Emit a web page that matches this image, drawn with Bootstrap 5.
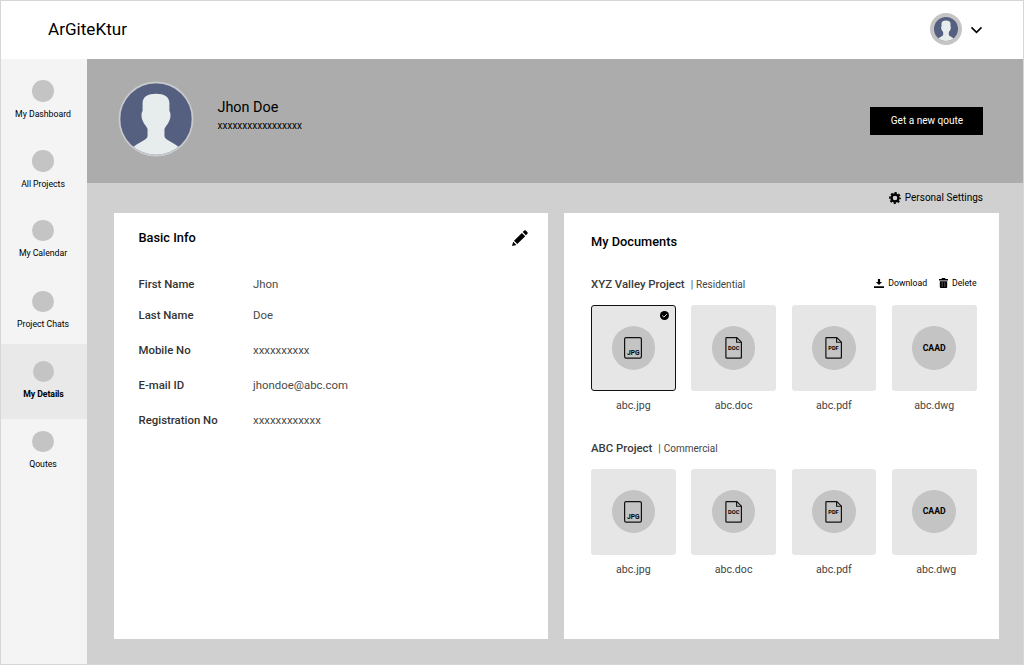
<!DOCTYPE html>
<html lang="en">
<head>
<meta charset="utf-8">
<meta name="viewport" content="width=device-width, initial-scale=1">
<title>ArGiteKtur</title>
<link href="https://cdn.jsdelivr.net/npm/bootstrap@5.3.0/dist/css/bootstrap.min.css" rel="stylesheet">
<style>
  body { font-family: Roboto, "Liberation Sans", sans-serif; color: #000; line-height: 1; }
  .app { height: 665px; border: 1px solid #d6d6d6; overflow: hidden; }
  .topbar { height: 58px; padding: 0 40px 2px 47px; }
  .brand-name { font-size: 17.1px; padding-top: 2px; }
  .side { flex: 0 0 86px; background: #f4f4f4; padding-top: 4px; display: grid; grid-template-rows: 70px 69.5px 71px 70px 75px 70px; align-content: start; }
  .side a { padding: 17px 2px 0 0; font-size: 8.75px; letter-spacing: -.04px; color: #000; text-decoration: none; }
  .side a:last-child { padding-top: 12px; }
  .side a.active { background: #e9e9e9; font-weight: 700; letter-spacing: -.1px; padding-right: 1px; }
  .dot { width: 21.5px; height: 21.5px; background: #c4c4c4; margin-bottom: 8px; }
  .main-area { background: #d0d0d0; min-width: 0; }
  .banner { height: 124px; background: #acacac; padding: 0 40px 0 30.5px; }
  .banner-avatar { margin-bottom: 5px; }
  .who { margin: 0 0 10px 24px; }
  .who-name { font-size: 14.4px; margin-bottom: 6px; }
  .who-id { font-size: 10px; }
  .quote-btn { width: 113px; height: 28px; font-size: 10.05px; margin-bottom: 1px; padding: 1px 0 0 1px; background: #000; }
  .settings { height: 30px; padding-right: 40px; font-size: 10px; }
  .panels { gap: 16px; padding: 0 25px 0 27px; }
  .panel { height: 426px; background: #fff; flex: 0 0 434px; }
  .panel-info { padding: 17px 20px 0 24.5px; }
  .panel-docs { padding: 21px 22px 0 27px; }
  .panel-title { font-size: 12.8px; font-weight: 500; margin: 0; line-height: 15px; }
  .info { grid-template-columns: 114.5px 1fr; grid-template-rows: 31px repeat(4, 35px); margin: 31px 0 0; font-size: 11.4px; line-height: 15px; color: #4a4a4a; }
  .info dt { font-weight: 500; color: #333; }
  .info dt, .info dd { margin: 0; }
  .proj { font-size: 11.4px; height: 15px; line-height: 15px; color: #444; }
  .proj b { font-weight: 500; color: #3a3a3a; }
  .kind { font-size: 10px; margin-left: 6px; }
  .kind span { margin-right: 3px; }
  .acts { font-size: 8.7px; color: #000; height: 12px; }
  .files { gap: 15.6px; }
  .file { width: 84.7px; font-size: 10.6px; color: #444; }
  .tile { height: 86px; border-radius: 3px; background: #e6e6e6; margin-bottom: 10px; }
  .tile.picked { border: 1px solid #111; }
  .tick { top: 5px; right: 6px; }
  .disc { width: 43.5px; height: 43.5px; background: #c4c4c4; color: #000; font-size: 8.7px; font-weight: 700; }
  svg { display: block; flex: none; }
</style>
</head>
<body>
<svg width="0" height="0" class="position-absolute">
  <symbol id="person" viewBox="0 0 72 72">
    <clipPath id="round"><circle cx="36" cy="36" r="36"/></clipPath>
    <g clip-path="url(#round)">
      <rect width="72" height="72" fill="#556080"/>
      <path fill="#e7eced" d="M36 10.500c-8 0-13.500 3-13.500 9.500v8c-1.500 2-1.500 7 0.500 10.500 1 3 3 4 4.500 7.500v7c0 4-9 6-16 12.500V74h49v-8.500c-7-6.500-16-8.500-16-12.500v-7c1.500-3.500 3.500-4.500 4.500-7.500 2-3.500 2-8.500 0.500-10.500v-8c0-6.500-5.500-9.500-13.500-9.500z"/>
    </g>
  </symbol>
  <symbol id="sheet" viewBox="0 0 18 22">
    <rect x=".6" y=".6" width="16.800" height="20.500" rx="1.600" fill="none" stroke="#111" stroke-width="1.200"/>
  </symbol>
  <symbol id="page" viewBox="0 0 18 22">
    <path d="M1.600.6h10.200l4.600 4.600v15.200q0 .7-.7.700H1.600q-.7 0-.7-.7V1.300q0-.7.700-.7z" fill="none" stroke="#111" stroke-width="1.200"/>
    <path d="M11.600.6v4.700h4.800" fill="none" stroke="#111" stroke-width="1.100"/>
  </symbol>
</svg>

<div class="app d-flex flex-column bg-white">
  <header class="topbar d-flex align-items-center justify-content-between">
    <span class="brand-name">ArGiteKtur</span>
    <div class="d-flex align-items-center">
      <svg width="32" height="32" viewBox="0 0 32 32"><circle cx="16" cy="16" r="16" fill="#c4c4c4"/><use href="#person" x="4" y="4" width="24" height="24"/></svg>
      <svg class="ms-2" width="13" height="9" viewBox="0 0 13 9"><path d="M1.500 2.400l5 4.900 5-4.900" fill="none" stroke="#000" stroke-width="1.600"/></svg>
    </div>
  </header>

  <div class="d-flex flex-grow-1">
    <nav class="side text-center">
      <a href="#"><div class="dot rounded-circle mx-auto"></div>My Dashboard</a>
      <a href="#"><div class="dot rounded-circle mx-auto"></div>All Projects</a>
      <a href="#"><div class="dot rounded-circle mx-auto"></div>My Calendar</a>
      <a href="#"><div class="dot rounded-circle mx-auto"></div>Project Chats</a>
      <a href="#" class="active"><div class="dot rounded-circle mx-auto"></div>My Details</a>
      <a href="#"><div class="dot rounded-circle mx-auto"></div>Qoutes</a>
    </nav>

    <main class="main-area flex-grow-1">
      <section class="banner d-flex align-items-center">
        <svg class="banner-avatar" width="76" height="76" viewBox="0 0 76 76"><circle cx="38" cy="38" r="37.500" fill="#c9cacc"/><use href="#person" x="2.200" y="2.200" width="71.600" height="71.600"/></svg>
        <div class="who">
          <div class="who-name">Jhon Doe</div>
          <div class="who-id">xxxxxxxxxxxxxxxxx</div>
        </div>
        <button class="quote-btn btn btn-dark rounded-0 border-0 ms-auto">Get a new qoute</button>
      </section>

      <div class="settings d-flex align-items-center justify-content-end gap-1">
        <svg width="12" height="12" viewBox="0 0 12 12"><circle cx="6" cy="6" r="3.500" fill="none" stroke="#000" stroke-width="2.400"/><circle cx="6" cy="6" r="5.100" fill="none" stroke="#000" stroke-width="1.700" stroke-dasharray="2.200 1.806" stroke-dashoffset="1.100"/></svg>
        <span>Personal Settings</span>
      </div>

      <div class="panels d-flex">
        <section class="panel panel-info">
          <div class="d-flex justify-content-between">
            <h2 class="panel-title">Basic Info</h2>
            <svg width="16" height="16" viewBox="0 0 16 16"><path d="M0 16l1.200-4.300 3.200 3.200zM2 10.800l7.900-7.900 3.300 3.300-7.900 7.900zM10.700 2.100L12.200.6q.8-.8 1.600 0l1.600 1.600q.8.800 0 1.600L13.900 5.300z"/></svg>
          </div>
          <dl class="info d-grid">
            <dt>First Name</dt><dd>Jhon</dd>
            <dt>Last Name</dt><dd>Doe</dd>
            <dt>Mobile No</dt><dd>xxxxxxxxxx</dd>
            <dt>E-mail ID</dt><dd>jhondoe@abc.com</dd>
            <dt>Registration No</dt><dd>xxxxxxxxxxxx</dd>
          </dl>
        </section>

        <section class="panel panel-docs">
          <h2 class="panel-title">My Documents</h2>
          <div class="proj d-flex" style="margin-top:28px">
            <b>XYZ Valley Project</b><span class="kind"><span>|</span>Residential</span>
            <div class="acts d-flex align-items-center ms-auto">
              <svg width="10" height="9" viewBox="0 0 10 9"><path d="M3.900 0h2.200v3h2L5 6 1.900 3h2zM0 7.300h10V9H0z"/></svg>
              <span class="ms-1 me-2 pe-1">Download</span>
              <svg width="9" height="10" viewBox="0 0 9 10"><path d="M0 1h2.500L3 0h3l.5 1H9v1.500H0zM.8 3.200h7.400V9q0 1-1 1H1.800q-1 0-1-1z"/><path d="M3.200 4.200v4.800M5.800 4.200v4.800" stroke="#888" stroke-width=".6"/></svg>
              <span class="ms-1">Delete</span>
            </div>
          </div>
          <div class="files d-flex" style="margin-top:13px">
            <div class="file text-center">
              <div class="tile picked d-flex align-items-center justify-content-center position-relative">
                <svg class="tick position-absolute" width="9" height="9" viewBox="0 0 9 9"><circle cx="4.500" cy="4.500" r="4.500"/><path d="M2.300 4.600l1.600 1.500 2.900-2.900" fill="none" stroke="#e6e6e6" stroke-width="1"/></svg>
                <div class="disc rounded-circle d-flex align-items-center justify-content-center"><svg width="18" height="22"><use href="#sheet"/><text x="9.200" y="18" text-anchor="middle" font-size="7" textLength="12.500" lengthAdjust="spacingAndGlyphs">JPG</text></svg></div>
              </div>abc.jpg
            </div>
            <div class="file text-center"><div class="tile d-flex align-items-center justify-content-center"><div class="disc rounded-circle d-flex align-items-center justify-content-center"><svg width="18" height="22"><use href="#page"/><text x="8.700" y="12.500" text-anchor="middle" font-size="5.400" textLength="11.500" lengthAdjust="spacingAndGlyphs">DOC</text></svg></div></div>abc.doc</div>
            <div class="file text-center"><div class="tile d-flex align-items-center justify-content-center"><div class="disc rounded-circle d-flex align-items-center justify-content-center"><svg width="18" height="22"><use href="#page"/><text x="8.500" y="12.500" text-anchor="middle" font-size="5.200" textLength="10.300" lengthAdjust="spacingAndGlyphs">PDF</text></svg></div></div>abc.pdf</div>
            <div class="file text-center"><div class="tile d-flex align-items-center justify-content-center"><div class="disc rounded-circle d-flex align-items-center justify-content-center">CAAD</div></div>abc.dwg</div>
          </div>

          <div class="proj d-flex" style="margin-top:29px">
            <b>ABC Project</b><span class="kind"><span>|</span>Commercial</span>
          </div>
          <div class="files d-flex" style="margin-top:13px">
            <div class="file text-center"><div class="tile d-flex align-items-center justify-content-center"><div class="disc rounded-circle d-flex align-items-center justify-content-center"><svg width="18" height="22"><use href="#sheet"/><text x="9.200" y="18" text-anchor="middle" font-size="7" textLength="12.500" lengthAdjust="spacingAndGlyphs">JPG</text></svg></div></div>abc.jpg</div>
            <div class="file text-center"><div class="tile d-flex align-items-center justify-content-center"><div class="disc rounded-circle d-flex align-items-center justify-content-center"><svg width="18" height="22"><use href="#page"/><text x="8.700" y="12.500" text-anchor="middle" font-size="5.400" textLength="11.500" lengthAdjust="spacingAndGlyphs">DOC</text></svg></div></div>abc.doc</div>
            <div class="file text-center"><div class="tile d-flex align-items-center justify-content-center"><div class="disc rounded-circle d-flex align-items-center justify-content-center"><svg width="18" height="22"><use href="#page"/><text x="8.500" y="12.500" text-anchor="middle" font-size="5.200" textLength="10.300" lengthAdjust="spacingAndGlyphs">PDF</text></svg></div></div>abc.pdf</div>
            <div class="file text-center"><div class="tile d-flex align-items-center justify-content-center"><div class="disc rounded-circle d-flex align-items-center justify-content-center">CAAD</div></div><span class="ps-1">abc.dwg</span></div>
          </div>
        </section>
      </div>
    </main>
  </div>
</div>
<script src="https://cdn.jsdelivr.net/npm/bootstrap@5.3.0/dist/js/bootstrap.bundle.min.js"></script>
</body>
</html>
